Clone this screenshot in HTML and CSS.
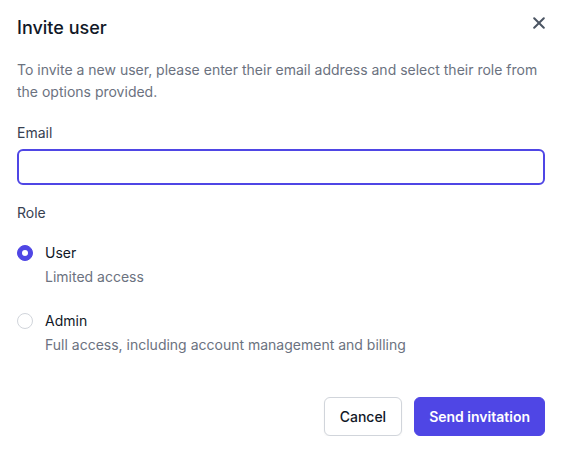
FILE: index.html
```html
<!DOCTYPE html>
<html lang="en">
<head>
<meta charset="utf-8">
<title>Invite user</title>
<link rel="stylesheet" href="styles.css">
</head>
<body>
<div class="dialog">
  <div class="header">
    <h2 class="title">Invite user</h2>
    <button class="close" aria-label="Close">
      <svg width="12" height="12" viewBox="0 0 12 12" fill="none" stroke="currentColor" stroke-width="2" stroke-linecap="round"><path d="M1.2 1.2 L10.8 10.8 M10.8 1.2 L1.2 10.8"/></svg>
    </button>
  </div>
  <p class="desc">To invite a new user, please enter their email address and select their role from the options provided.</p>
  <label class="label label-email" for="email">Email</label>
  <input class="input" id="email" type="email">
  <div class="label label-role">Role</div>
  <div class="options">
    <label class="option">
      <span class="radio checked"></span>
      <span class="opt-text">
        <span class="opt-name">User</span>
        <span class="opt-desc">Limited access</span>
      </span>
    </label>
    <label class="option">
      <span class="radio"></span>
      <span class="opt-text">
        <span class="opt-name">Admin</span>
        <span class="opt-desc">Full access, including account management and billing</span>
      </span>
    </label>
  </div>
  <div class="actions">
    <button class="btn btn-cancel">Cancel</button>
    <button class="btn btn-primary">Send invitation</button>
  </div>
</div>
</body>
</html>
```
FILE: styles.css
```css
* { box-sizing: border-box; }
html, body { margin: 0; padding: 0; background: #ffffff; }
body {
  font-family: Inter, "Noto Sans", "Liberation Sans", sans-serif;
  color: #111827;
}
.dialog {
  width: 564px;
  padding: 14px 19px 0 17px;
  display: flex;
  flex-direction: column;
}
.header {
  display: flex;
  justify-content: space-between;
  align-items: flex-start;
}
.title {
  margin: 0;
  font-size: 18px;
  line-height: 28px;
  font-weight: 500;
  color: #111827;
}
.close {
  margin: 3px 0 0 0;
  padding: 0;
  border: 0;
  background: none;
  color: #4b5563;
  width: 12px;
  height: 12px;
  display: flex;
}
.desc {
  margin: 17px 0 0 0;
  font-size: 14px;
  line-height: 22px;
  color: #6b7280;
}
.label {
  display: block;
  font-size: 14px;
  line-height: 20px;
  font-weight: 400;
  color: #374151;
}
.label-email { margin-top: 20px; }
.input {
  margin-top: 6px;
  height: 36px;
  width: 100%;
  border: 2px solid #4f46e5;
  border-radius: 6px;
  outline: none;
  font: inherit;
}
.label-role { margin-top: 18px; }
.options {
  display: flex;
  flex-direction: column;
  gap: 24px;
  margin-top: 20px;
}
.option {
  display: flex;
  align-items: flex-start;
  gap: 12px;
}
.radio {
  flex: none;
  margin: 2px 0 0 0;
  width: 16px;
  height: 16px;
  border-radius: 50%;
  border: 1px solid #d1d5db;
  background: #fff;
  display: flex;
  align-items: center;
  justify-content: center;
}
.radio.checked {
  border-color: #4f46e5;
  background: #4f46e5;
}
.radio.checked::after {
  content: "";
  width: 6px;
  height: 6px;
  border-radius: 50%;
  background: #fff;
}
.opt-text {
  display: flex;
  flex-direction: column;
  gap: 4px;
}
.opt-name {
  font-size: 14px;
  line-height: 20px;
  font-weight: 400;
  color: #111827;
}
.opt-desc {
  font-size: 14px;
  line-height: 20px;
  color: #6b7280;
}
.actions {
  margin-top: 42px;
  display: flex;
  justify-content: flex-end;
  gap: 12px;
}
.btn {
  height: 39px;
  border-radius: 6px;
  font-family: inherit;
  font-size: 14px;
  line-height: 20px;
}
.btn-cancel {
  padding: 0 15px;
  background: #fff;
  border: 1px solid #d1d5db;
  color: #111827;
  font-weight: 500;
  box-shadow: 0 1px 2px rgba(0,0,0,0.05);
}
.btn-primary {
  padding: 0 14px;
  background: #4f46e5;
  border: 1px solid #4f46e5;
  color: #fff;
  font-weight: 600;
}
```
